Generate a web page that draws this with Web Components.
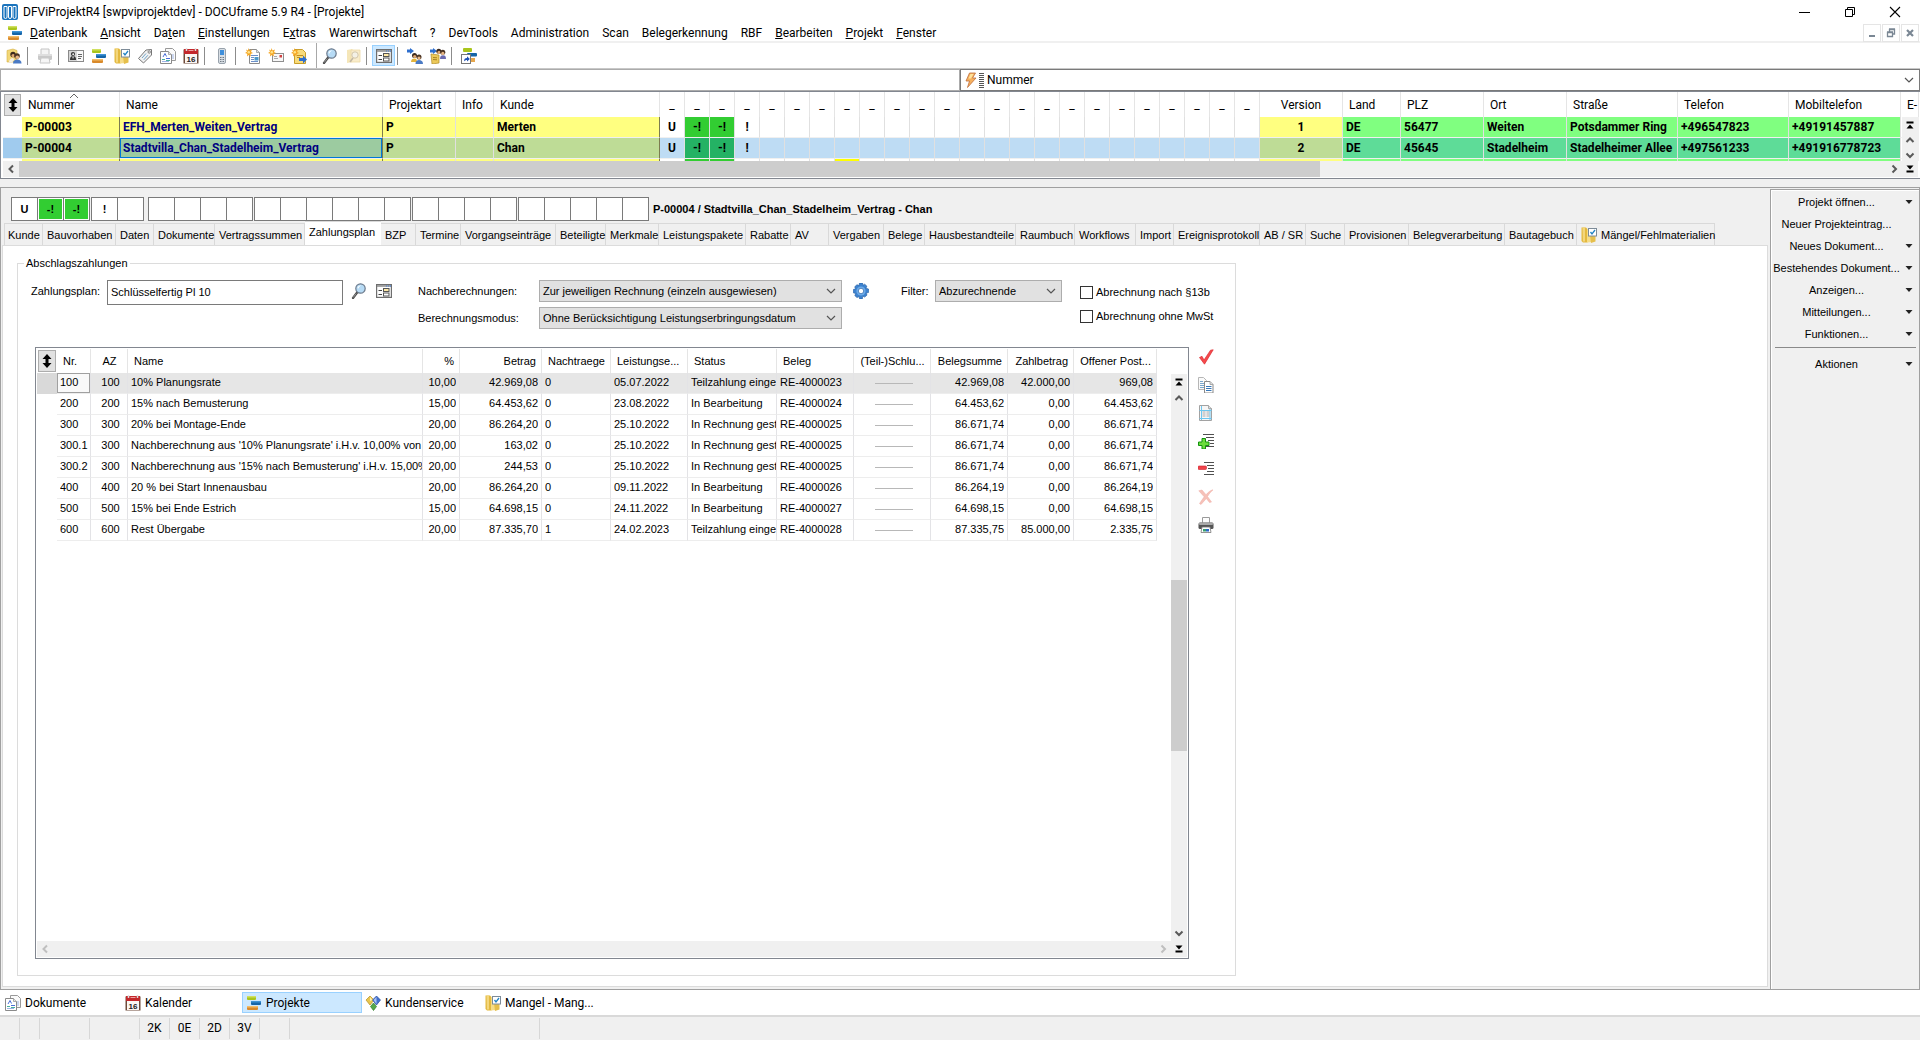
<!DOCTYPE html>
<html lang="de">
<head>
<meta charset="utf-8">
<title>DFViProjektR4 [swpviprojektdev] - DOCUframe 5.9 R4 - [Projekte]</title>
<style>
  html, body { margin: 0; height: 100%; }
  body {
    --ui: Roboto, "Noto Sans", sans-serif;
    --form: "Liberation Sans", Arial, sans-serif;
    font: 12px/16px var(--ui);
    color: #000;
    background: #fff;
  }
</style>
</head>
<body>
<df-app></df-app>
<script>
const ICONS = {
  app: '<rect x="0" y="0" width="16" height="16" rx="2" fill="#1b74bd"/><path d="M2 13V2.500h3V13a1 1 0 0 1-3 0zM6.500 13V2.500h3V13a1 1 0 0 1-3 0zM11 13V2.500h3V13a1 1 0 0 1-3 0z" fill="#1b74bd" stroke="#fff" stroke-width="1"/>',
  gantt: '<rect x="1" y="1" width="9" height="4" rx="1" fill="#a9c51c"/><rect x="1" y="1" width="9" height="1.500" fill="#d0e060"/><rect x="5" y="6" width="10" height="4" rx="1" fill="#1565a8"/><rect x="5" y="6" width="10" height="1.500" fill="#3f93d6"/><rect x="1" y="11" width="11" height="4" rx="1" fill="#d98a2b"/><rect x="1" y="11" width="11" height="1.500" fill="#f3bd6b"/>',
  people: '<path d="M1 2.500l6-1.500 4 1.500V14H1z" fill="#f2d777" stroke="#d5b043" stroke-width=".6"/><circle cx="7" cy="6.500" r="2.700" fill="#3c2a1e"/><circle cx="7.200" cy="7.600" r="1.700" fill="#e0a871"/><circle cx="11" cy="8" r="2.800" fill="#4a3322"/><circle cx="11.300" cy="9.200" r="1.800" fill="#e8b684"/><path d="M7 15.500c0-3 2-4 4.300-4s4.200 1 4.200 4z" fill="#4a7ac4"/><path d="M3 14c0-2 2-4 4-4l1.200 1.500L6.500 14z" fill="#f5efe0"/>',
  printerOff: '<path d="M4 1h8v6H4z" fill="#f4f4f4" stroke="#c4c4c4"/><rect x="1" y="6" width="14" height="6" rx="1.500" fill="#c9c9c9"/><rect x="1" y="6" width="14" height="2" rx="1" fill="#dedede"/><path d="M4 10h8l1 5H3z" fill="#f6f6f6" stroke="#c8c8c8"/>',
  printer: '<path d="M4.500.500h7v6h-7z" fill="#fdfdfd" stroke="#9a9a9a"/><rect x=".5" y="5.500" width="15" height="6.500" rx="1.500" fill="#555"/><rect x="1" y="5.500" width="14" height="2.500" rx="1" fill="#a9a9a9"/><path d="M4 10h8l1 5.500H3z" fill="#fff" stroke="#777" stroke-width=".8"/><rect x="5" y="12" width="3" height="2.500" fill="#38a070"/><rect x="8" y="12" width="3" height="2.500" fill="#2c67c8"/>',
  card: '<rect x=".5" y="2.500" width="15" height="11" fill="#f8f8f8" stroke="#8a8a8a"/><rect x="1" y="3" width="8" height="10" fill="#d6d6d6"/><circle cx="5" cy="6" r="2.100" fill="#333"/><path d="M2 12c0-3 1-4 3-4s3 1 3 4z" fill="#333"/><circle cx="5.200" cy="6.300" r="1" fill="#eee"/><path d="M4.300 8.500h1.600L5 11z" fill="#fff"/><path d="M10 6.500h4M10 8.500h4M10 10.500h3" stroke="#666"/>',
  folderCheck: '<path d="M.5.500h4.500l1.500 1.500v13.500H2L.5 14z" fill="#e3b93f"/><path d="M1.500.500h2.500v14H2z" fill="#f3d67c"/><path d="M6 3h5v12l-5 .5z" fill="#f6dc87"/><path d="M9 8h5.500v6.500L10 16z" fill="#e5bf4c"/><rect x="7.500" y="1.500" width="8" height="7.500" fill="#fff" stroke="#7d8b98"/><path d="M9.500 5l1.500 2 3-4" fill="none" stroke="#2183c4" stroke-width="1.300"/>',
  tag: '<path d="M1.500 10.500L9 2l5.500-.5v5.500L6.500 15z" fill="#f1f1f1" stroke="#777"/><path d="M5 10l4-4.500M6.800 11.800l4-4.500" stroke="#6ea3c9"/><circle cx="12.200" cy="4" r="1.200" fill="#fff" stroke="#666" stroke-width=".8"/>',
  docs: '<path d="M5.500.500h7l3 3v9h-10z" fill="#fafafa" stroke="#999"/><path d="M.5 3.500h8l3 3v9H.5z" fill="#fff" stroke="#8a8a8a"/><path d="M8.500 3.500v3h3" fill="#e6e6e6" stroke="#999" stroke-width=".8"/><path d="M3 9l2-3.500 1.500 3M6 10.500h4" fill="none" stroke="#4a6fd8"/><path d="M2 11.500h3M6 12.500h4" stroke="#47b0a0"/><path d="M2 13.500h7" stroke="#9db4e6"/><path d="M13 6v5" stroke="#9db4e6"/>',
  calendar: '<rect x=".5" y="1.500" width="15" height="14" fill="#6e4b3a"/><rect x="2" y="6" width="12" height="9" fill="#fbf6f3"/><rect x="1" y="1" width="14" height="5" fill="#c3272b"/><path d="M3.500 0v3M12.500 0v3" stroke="#ddd" stroke-width="1.500"/><path d="M5.500 2.500h5" stroke="#f0a0a0"/><text x="8" y="13.500" text-anchor="middle" font-family="Liberation Sans,Arial,sans-serif" font-size="8" font-weight="700" fill="#222">16</text>',
  phone: '<rect x="4.500" y=".5" width="7" height="15" rx="1.500" fill="#d8dee4" stroke="#98a2ac"/><rect x="6" y="2" width="4" height="5" fill="#3f8fdb"/><path d="M6 9.500h4M6 11.500h4M6 13.500h4" stroke="#707a84" stroke-dasharray="1 .5"/>',
  newDoc: '<path d="M4.500 1.500h7l3 3v11h-10z" fill="#fff" stroke="#8b8b8b"/><path d="M11.500 1.500v3h3" fill="#ddd" stroke="#999" stroke-width=".8"/><path d="M6 7.500h7M6 9.500h3M6 11.500h3M6 13.500h7" stroke="#6c8fc8"/><rect x="9.500" y="9" width="4" height="3.500" fill="#4d9aca"/><path d="M3.500 0l1 2.500L7 1.500 6 4l2 1-2.500 1 .5 2.500L3.800 7 2 8.500l.3-2.700L0 5l2-1.200L1 1.500l2 1z" fill="#f5a623"/><circle cx="3.800" cy="4.200" r="1.300" fill="#ffe48a"/>',
  newMail: '<rect x="4.500" y="5.500" width="11" height="8" fill="#f7f7f7" stroke="#8f8f8f"/><rect x="11.500" y="7" width="2.500" height="2.500" fill="#cf4040"/><path d="M6 10.500h4M6 8.500h3" stroke="#aaa"/><path d="M3.500 0l1 2.500L7 1.500 6 4l2 1-2.500 1 .5 2.500L3.800 7 2 8.500l.3-2.700L0 5l2-1.200L1 1.500l2 1z" fill="#f5a623"/><circle cx="3.800" cy="4.200" r="1.300" fill="#ffe48a"/>',
  newEntry: '<path d="M3.500 1.500h8l3 3v11h-11z" fill="#f8db7b" stroke="#c99e2b"/><path d="M6 7.500h6M6 9.500h3" stroke="#c08f20"/><path d="M8 10h4V7.500l4 4-4 4V13H8z" fill="#2e6fce"/><path d="M3.500 0l1 2.500L7 1.500 6 4l2 1-2.500 1 .5 2.500L3.800 7 2 8.500l.3-2.700L0 5l2-1.200L1 1.500l2 1z" fill="#f5a623"/><circle cx="3.800" cy="4.200" r="1.300" fill="#ffe48a"/>',
  lens: '<path d="M2 15l4.500-6" stroke="#4b4b4b" stroke-width="2.200" stroke-linecap="round"/><path d="M2.200 14.500l3-4" stroke="#b0b0b0" stroke-width=".7"/><circle cx="9.500" cy="5.500" r="4.700" fill="#b7dbf5" stroke="#6c7a8c" stroke-width="1.200"/><path d="M6.500 5c.3-2 2-2.800 3.800-2.500-1.500.5-2.500 1.500-3 3.200z" fill="#fff"/>',
  folderLens: '<path d="M2 2l5-1 1 1v12l-6 1z" fill="#f5e6b8"/><path d="M6 2h9v12H6z" fill="#f9eccb" stroke="#eddba6" stroke-width=".8"/><path d="M5 14l3-4" stroke="#c2b8a4" stroke-width="1.600"/><circle cx="10" cy="7" r="3.200" fill="#f4f1e6" stroke="#d3c7ab"/>',
  form: '<rect x=".6" y="1.600" width="14.800" height="12.800" fill="#fdfdfd" stroke="#6e6e6e" stroke-width="1.200"/><path d="M1 3h14" stroke="#8b8b8b" stroke-width="1.500"/><path d="M10 3h1M12 3h1M14 3h1" stroke="#3d7ee0"/><path d="M2.500 7.500H6M2.500 11.500H6" stroke="#444"/><rect x="7.500" y="5.500" width="5.500" height="3" fill="#ffe9a6" stroke="#555"/><rect x="7.500" y="10" width="5.500" height="3" fill="#fff" stroke="#555"/>',
  arrowPeople: '<path d="M0 1.500h3V0l4 3-4 3V4.500H0z" fill="#2e6fce"/><circle cx="7.500" cy="7.500" r="2.500" fill="#3c2a1e"/><circle cx="7.700" cy="8.500" r="1.600" fill="#e0a871"/><path d="M4 14c0-2.500 1.500-3.500 3.500-3.500S10 12 10 14z" fill="#e4b43a"/><circle cx="12" cy="9" r="2.500" fill="#4a3322"/><circle cx="12" cy="10" r="1.600" fill="#e8b684"/><path d="M8.500 16c0-3 1.500-4 3.500-4s4 1 4 4z" fill="#4a7ac4"/>',
  folderPeople: '<path d="M1 6l8 1v8l-7 1z" fill="#ecc95a" stroke="#b08c28" stroke-width=".7"/><path d="M3 9.500l4 .3M3 11.500l4 .3" stroke="#a88220"/><path d="M0 1.500h3V0l4 3-4 3V4.500H0z" fill="#2e6fce"/><circle cx="8.800" cy="3.300" r="2.500" fill="#3c2a1e"/><circle cx="9" cy="4.400" r="1.600" fill="#e0a871"/><circle cx="12.800" cy="4.300" r="2.500" fill="#4a3322"/><circle cx="12.800" cy="5.400" r="1.600" fill="#e8b684"/><path d="M10 11c0-3 1-3.800 3-3.800s3 .8 3 3.800z" fill="#6b6bb0"/>',
  ganttLink: '<rect x="2" y="0" width="9" height="4" rx="1" fill="#a9c51c"/><rect x="6" y="5" width="10" height="3.500" rx="1" fill="#1565a8"/><rect x="8" y="10" width="6" height="4" fill="#e6a64c"/><rect x=".5" y="6.500" width="9" height="9" fill="#fff" stroke="#777"/><path d="M3 13.500c0-2.500 1-3.500 3-3.500V8.300L8.800 11 6 13.500V12c-1.500 0-2 .5-3 1.500z" fill="#1d50b4"/>',
  bolt: '<path d="M6.500 1h6L9.500 6H13L4.500 15.500 6.500 9H3z" fill="#f6b05e" stroke="#bf6f3c" stroke-width=".8"/><path d="M7.500 2h3L8 6.500H5.500z" fill="#ffe39a"/>',
  gear: '<path d="M6.500 0h3l.5 2.200 1.700-1 2.200 2-1 2L15.500 6v3.500l-2.300.6.8 2-2.300 2-1.900-1L9.300 16H6.700l-.7-2.400-2 1-2.200-2 1-2L.3 9.800V6.500l2.300-.7-.9-2L4 1.700l2 .9z" fill="#3d82cf" stroke="#1f5a9f" stroke-width=".6"/><circle cx="8" cy="8" r="4.600" fill="#6cabe8"/><circle cx="8" cy="8" r="2.700" fill="#fff" stroke="#2b66ab" stroke-width=".7"/>',
  check: '<path d="M1.500 8.500L4 7.300 6 11 12.500 1.200 15.200.800 6.500 15.200z" fill="#f5494c" stroke="#dc2b30" stroke-width=".7"/>',
  copy: '<path d="M.5.500h5l3 3v9h-8z" fill="#fafafa" stroke="#b6b6b6"/><path d="M2 4.500h3M2 6.500h4M2 8.500h4M2 10.500h4" stroke="#7aa7cd"/><path d="M6.500 4.500h5.500l3 3v8.500H6.500z" fill="#fff" stroke="#8a8a8a"/><path d="M12 4.500v3h3" fill="#ddd" stroke="#999" stroke-width=".8"/><path d="M8 9.500h5.500M8 11.500h5.500M8 13.500h5.500" stroke="#3978b8"/>',
  report: '<path d="M1.500.500h9l3 3v12h-12z" fill="#f6f6f6" stroke="#a2a2a2"/><path d="M10.500.500v3h3" fill="#ddd" stroke="#999" stroke-width=".8"/><path d="M4.500 7h3M4.500 9h3M4.500 11h3M8.500 7h3M8.500 9h3M8.500 11h3" stroke="#aaa" stroke-width="1.200"/><path d="M3.500 1v14M12 4v11M1.500 5.500h12M1.500 13.500h12" stroke="#6cc6ef"/>',
  addLine: '<path d="M5 1.500h11M8 4.500h8M10 7.500h6M12 10.500h4M8 13.500h8" stroke="#505050"/><path d="M4 5.500h3.500V9H11v3.500H7.500V16H4v-3.500H.5V9H4z" fill="#6bdc3c" stroke="#12920f"/>',
  removeLine: '<path d="M6 1.500h10M9 4.500h7M10 7.500h6M9 10.500h7M6 13.500h10" stroke="#505050"/><rect x="0" y="5" width="8.500" height="3.500" rx="1" fill="#f0444a" stroke="#ce2430" stroke-width=".6"/>',
  cross: '<path d="M.8 1.800L4 1l4 4.700C10 3.500 12 1.500 15 .800 12.500 3 11 5 9.500 7.500l4 5.500-2 .5-3.200-4L3 15.500l-1.500-1L6.200 7.800z" fill="#f6c1b8" stroke="#efaba2" stroke-width=".5"/>',
  diamonds: '<path d="M5 1l4 4-4 5-4-5z" fill="#e8c64f" stroke="#b58f22" stroke-width=".7"/><path d="M11.500 1l4 4-4 5-4-5z" fill="#3f6fd0" stroke="#274a9c" stroke-width=".7"/><path d="M11.500 2v7l-3-4z" fill="#a9c2f2"/><path d="M8.500 8l3 3.500-3 4-3-4z" fill="#55a84a" stroke="#2f7a28" stroke-width=".7"/><path d="M5 2l2.500 3L5 6z" fill="#fff2b0"/>',
  sort: '<path d="M8 1l4.500 5H9.500v4h3L8 15l-4.500-5h3V6h-3z" fill="#000"/>',
  asc: '<path d="M4 5l4-4 4 4" fill="none" stroke="#666"/>',
  chevron: '<path d="M4 6l4 4 4-4" fill="none" stroke="#555" stroke-width="1.200"/>',
  up: '<path d="M4.500 10L8 6.500l3.500 3.500" fill="none" stroke="#5a5a5a" stroke-width="2"/>',
  down: '<path d="M4.500 6.500L8 10l3.500-3.500" fill="none" stroke="#5a5a5a" stroke-width="2"/>',
  left: '<path d="M10 4.500L6.500 8l3.500 3.500" fill="none" stroke="currentColor" stroke-width="2"/>',
  right: '<path d="M6.500 4.500L10 8l-3.500 3.500" fill="none" stroke="currentColor" stroke-width="2"/>',
  first: '<path d="M4.500 4.500h7v2h-7zM8 7.500l3.500 4h-7z"/>',
  last: '<path d="M4.500 9.500h7v2h-7zM8 8.500l3.500-4h-7z"/>',
  drop: '<path d="M4.500 6h7L8 10z" fill="#222"/>',
  min: '<path d="M2 8.500h11" stroke="#000"/>',
  max: '<path d="M3.500 5.500h7v7h-7zM5.500 5.500v-2h7v7h-2" fill="none" stroke="#000"/>',
  close: '<path d="M3 3l10 10M13 3L3 13" stroke="#000" stroke-width="1.100"/>',
  mdiMin: '<path d="M5 10h6v2H5z" fill="#7a8794"/>',
  mdiMax: '<path d="M4.500 7.500h5v4h-5zM4 7h6M6.500 7V4.500h5V9h-2M6 4h6" fill="none" stroke="#7a8794" stroke-width="1.300"/>',
  mdiClose: '<path d="M5 5l6 6M11 5l-6 6" stroke="#7a8794" stroke-width="2.200"/>'
};

class DfElement extends HTMLElement {
  paint(css, html) {
    if (!this.shadowRoot) this.attachShadow({ mode: "open" });
    this.shadowRoot.innerHTML = `<style>
      *, *::before { box-sizing: border-box; }
      button, input, select { font: inherit; color: inherit; margin: 0; padding: 0; border: 0; background: none; border-radius: 0; }
      ${css}</style>${html}`;
  }
}
const define = (name, cls) => customElements.define(name, cls);

define("df-icon", class extends DfElement {
  connectedCallback() {
    this.paint(`:host { display: block; width: 16px; height: 16px; flex: none; } svg { display: block; }`,
      `<svg width="16" height="16" viewBox="0 0 16 16" aria-hidden="true">${ICONS[this.getAttribute("name")]}</svg>`);
  }
});

define("df-titlebar", class extends DfElement {
  connectedCallback() {
    this.paint(`
      :host { display: flex; align-items: center; height: 24px; padding: 0 3px 0 2px; background: #fff; }
      .text { flex: 1; padding-left: 5px; white-space: nowrap; }
      button { display: flex; justify-content: center; align-items: center; width: 45px; height: 24px; }
      button:hover { background: #e5e5e5; }`,
      `<df-icon name="app"></df-icon><span class="text"><slot></slot></span>
      <button aria-label="Minimieren"><df-icon name="min"></df-icon></button>
      <button aria-label="Wiederherstellen"><df-icon name="max"></df-icon></button>
      <button aria-label="Schließen"><df-icon name="close"></df-icon></button>`);
  }
});

define("df-menubar", class extends DfElement {
  connectedCallback() {
    const items = ["_Datenbank", "_Ansicht", "Da_ten", "_Einstellungen", "E_xtras", "Warenwirtschaft", "?", "DevTools",
      "Administration", "Scan", "Belegerkennung", "RBF", "_Bearbeiten", "_Projekt", "_Fenster"];
    this.paint(`
      :host { display: flex; align-items: center; height: 19px; border-bottom: 2px solid #f0f0f0; background: #fff; }
      nav { display: flex; flex: 1; align-items: center; padding: 1px 0 0 7px; }
      nav button { padding: 0 6px 0 7px; line-height: 17px; white-space: nowrap; }
      nav button:hover { background: #e5f3ff; }
      .mdi { display: flex; gap: 1px; padding-right: 1px; }
      .mdi button { display: flex; align-items: center; justify-content: center; width: 18px; height: 18px; border: 1px solid #e5e5e5; }`,
      `<nav><df-icon name="gantt"></df-icon>${items.map(t => `<button>${t.replace(/_(.)/, "<u>$1</u>")}</button>`).join("")}</nav>
      <div class="mdi"><button aria-label="Minimieren"><df-icon name="mdiMin"></df-icon></button><button aria-label="Wiederherstellen"><df-icon name="mdiMax"></df-icon></button><button aria-label="Schließen"><df-icon name="mdiClose"></df-icon></button></div>`);
  }
});

define("df-toolbar", class extends DfElement {
  connectedCallback() {
    const items = "people | printerOff | card gantt folderCheck tag docs calendar | phone | newDoc newMail newEntry || lens folderLens | *form | arrowPeople folderPeople | ganttLink".split(" ");
    this.paint(`
      :host { display: flex; align-items: center; height: 26px; padding-left: 2px; border-bottom: 1px solid #c8c8c8; background: #fff; }
      button { display: flex; align-items: center; justify-content: center; width: 23px; height: 21px; }
      button:hover { background: #e5f3ff; }
      .on { background: #cce8ff; border: 1px solid #99d1ff; }
      i { width: 8px; height: 18px; padding-left: 2px; }
      i::before { content: ""; display: block; width: 1px; height: 100%; background: #8c8c8c; }
      .wide { height: 25px; padding-left: 6px; }
      .wide::before { background: #a8a8a8; }`,
      items.map(n => n === "|" ? "<i></i>" : n === "||" ? '<i class="wide"></i>'
        : `<button class="${n[0] === "*" ? "on" : ""}" aria-label="${n.replace("*", "")}"><df-icon name="${n.replace("*", "")}"></df-icon></button>`).join(""));
  }
});

define("df-select", class extends DfElement {
  connectedCallback() {
    this.paint(`
      :host { display: grid; grid-template-columns: 1fr 18px; height: 22px; border: 1px solid #adadad; background: #e1e1e1; }
      select { grid-area: 1 / 1 / 2 / 3; min-width: 0; padding: 0 18px 0 3px; appearance: none; outline: 0; }
      df-icon { grid-area: 1 / 2; align-self: center; pointer-events: none; }`,
      `<select aria-label="${this.getAttribute("label")}"><option>${this.getAttribute("value")}</option></select><df-icon name="chevron"></df-icon>`);
  }
});

define("df-searchbar", class extends DfElement {
  connectedCallback() {
    this.paint(`
      :host { display: grid; grid-template-columns: repeat(2, minmax(0, 1fr)); height: 22px; background: #fff; }
      input { width: 100%; padding: 0 4px; border: 1px solid #ababab; background: #fff; outline: 0; }
      .field { display: flex; align-items: center; padding-left: 2px; border: 1px solid #7a7a7a; }
      .bars { width: 5px; height: 15px; background: repeating-linear-gradient(#555 0 1px, #fff 1px 2px); }
      df-select { flex: 1; height: 20px; border: 0; background: #fff; }`,
      `<input aria-label="Suche"><div class="field"><df-icon name="bolt"></df-icon><span class="bars"></span><df-select label="Suchfeld" value="Nummer"></df-select></div>`);
  }
});

define("df-scrollbar", class extends DfElement {
  connectedCallback() {
    const vertical = this.hasAttribute("vertical");
    this.paint(`
      :host { display: flex; background: #f0f0f0; height: 16px; color: #5a5a5a; }
      :host([vertical]) { flex-direction: column; width: 16px; height: auto; }
      :host([idle]) { color: #bfbfbf; }
      .track { flex: 1; display: flex; flex-direction: inherit; }
      .before { flex: var(--before, 0); } .thumb { flex: var(--thumb, 0); background: #cdcdcd; } .after { flex: var(--after, 1); }
      df-icon { color: inherit; }`,
      `${vertical ? '<df-icon name="first"></df-icon><df-icon name="up"></df-icon>' : '<df-icon name="left"></df-icon>'}
      <div class="track"><span class="before"></span><span class="thumb"></span><span class="after"></span></div>
      <df-icon name="${vertical ? "down" : "right"}"></df-icon>`);
  }
});

define("df-projects", class extends DfElement {
  connectedCallback() {
    const flags = Array(24).fill(25);
    const widths = [19, 98, 263, 73, 38, 166, ...flags, 83, 58, 83, 83, 111, 111, 112];
    const heads = ["Nummer", "Name", "Projektart", "Info", "Kunde", ...flags.map(() => "_"), "Version", "Land", "PLZ", "Ort", "Straße", "Telefon", "Mobiltelefon", "E-"];
    const kind = i => i < 5 ? "y" : i < 29 ? ([6, 7].includes(i) ? "f g" : "f") : i === 29 ? "y c" : "t";
    const row = (cls, v) => {
      const cells = [...v.slice(0, 5), "U", "-!", "-!", "!", ...Array(20).fill(""), ...v.slice(5)];
      return `<tr class="${cls}"><th></th>${cells.map((t, i) => `<td class="${kind(i)}${i === 1 ? " n" : ""}${i === 12 ? " h" : ""}"><div>${t}</div></td>`).join("")}<td></td></tr>`;
    };
    this.paint(`
      :host { display: grid; grid-template: 69px 16px / minmax(0, 1fr) 17px; border: 1px solid #828790; border-right: 0; padding: 0 1px 1px 2px; background: #fff; }
      .view { grid-area: 1 / 1 / 2 / 3; overflow: hidden; }
      table { width: 100%; border-collapse: separate; border-spacing: 0; table-layout: fixed; }
      thead th { height: 25px; padding: 1px 0 0 6px; border-right: 1px solid #e5e5e5; font-weight: 400; text-align: left; white-space: nowrap; overflow: hidden; }
      thead th:first-child { padding: 1px; border: 0; }
      thead .c { padding: 1px 0 0; text-align: center; }
      thead button { display: flex; align-items: center; justify-content: center; width: 17px; height: 22px; border: 1px solid #adadad; background: #e1e1e1; }
      .sorted { display: grid; }
      .sorted > * { grid-area: 1 / 1; }
      .sorted df-icon { justify-self: center; height: 6px; margin-top: -4px; overflow: hidden; }
      td, tbody th { height: 21px; padding: 0 0 0 3px; border-right: 1px solid #e0e0e0; border-bottom: 1px solid #f0f0f0; font-weight: 700; overflow: hidden; vertical-align: top; }
      td div { overflow: hidden; white-space: nowrap; height: 20px; line-height: 20px; }
      .y { background: #ffff80; } .t { background: #80ff80; } .g { background: #32cd32; }
      .f, .c { text-align: center; padding: 0; }
      td:nth-child(2), td:nth-child(3), td:nth-child(6) { border-right-color: #7c7c50; }
      .n { color: #000080; }
      tbody th { border-right: 0; }
      .sel th { background: #a0cbee; } .sel .y { background: #bedc96; } .sel .f { background: #bedcf4; }
      .sel .g { background: #24b264; } .sel .t { background: #5edc98; }
      .sel .n { background: #9ccba0; box-shadow: inset 0 0 0 1px #0078d7; }
      .cut .h { background: #ffff00; }
      .v { grid-area: 1 / 2; margin-top: 25px; display: flex; flex-direction: column; justify-content: space-between; background: #f0f0f0; }
      .v df-icon { height: 14px; }
      .corner { grid-area: 2 / 2; background: #f0f0f0; }`,
      `<div class="view"><table><colgroup>${widths.map(w => `<col style="width:${w}px">`).join("")}<col></colgroup>
        <thead><tr><th><button aria-label="Sortierung"><df-icon name="sort"></df-icon></button></th>${heads.map((h, i) => `<th class="${i > 4 && i < 30 ? "c" : ""}">${i ? h : `<span class="sorted"><span>${h}</span><df-icon name="asc"></df-icon></span>`}</th>`).join("")}</tr></thead>
        <tbody>${row("", ["P-00003", "EFH_Merten_Weiten_Vertrag", "P", "", "Merten", "1", "DE", "56477", "Weiten", "Potsdammer Ring", "+496547823", "+49191457887"])}
        ${row("sel", ["P-00004", "Stadtvilla_Chan_Stadelheim_Vertrag", "P", "", "Chan", "2", "DE", "45645", "Stadelheim", "Stadelheimer Allee", "+497561233", "+491916778723"])}
        <tr class="cut"><th></th>${Array.from({ length: 36 }, (_, i) => `<td class="${kind(i)}${i === 12 ? " h" : ""}"></td>`).join("")}<td></td></tr></tbody></table></div>
      <div class="v"><df-icon name="first"></df-icon><df-icon name="up"></df-icon><df-icon name="down"></df-icon></div>
      <df-scrollbar style="--before:0;--thumb:1300;--after:566"></df-scrollbar>
      <df-icon class="corner" name="last"></df-icon>`);
  }
});

define("df-plan-grid", class extends DfElement {
  connectedCallback() {
    const cols = [["Nr.", 34], ["AZ", 37, "c"], ["Name", 295], ["%", 37, "r"], ["Betrag", 82, "r"], ["Nachtraege", 69], ["Leistungse...", 77], ["Status", 89],
      ["Beleg", 77], ["(Teil-)Schlu...", 77, "c"], ["Belegsumme", 77, "r"], ["Zahlbetrag", 66, "r"], ["Offener Post...", 83, "r"]];
    const rows = [
      ["100", "100", "10% Planungsrate", "10,00", "42.969,08", "0", "05.07.2022", "Teilzahlung einge", "RE-4000023", "-", "42.969,08", "42.000,00", "969,08"],
      ["200", "200", "15% nach Bemusterung", "15,00", "64.453,62", "0", "23.08.2022", "In Bearbeitung", "RE-4000024", "-", "64.453,62", "0,00", "64.453,62"],
      ["300", "300", "20% bei Montage-Ende", "20,00", "86.264,20", "0", "25.10.2022", "In Rechnung gest", "RE-4000025", "-", "86.671,74", "0,00", "86.671,74"],
      ["300.1", "300", "Nachberechnung aus '10% Planungsrate' i.H.v. 10,00% von", "20,00", "163,02", "0", "25.10.2022", "In Rechnung gest", "RE-4000025", "-", "86.671,74", "0,00", "86.671,74"],
      ["300.2", "300", "Nachberechnung aus '15% nach Bemusterung' i.H.v. 15,00%", "20,00", "244,53", "0", "25.10.2022", "In Rechnung gest", "RE-4000025", "-", "86.671,74", "0,00", "86.671,74"],
      ["400", "400", "20 % bei Start Innenausbau", "20,00", "86.264,20", "0", "09.11.2022", "In Bearbeitung", "RE-4000026", "-", "86.264,19", "0,00", "86.264,19"],
      ["500", "500", "15% bei Ende Estrich", "15,00", "64.698,15", "0", "24.11.2022", "In Bearbeitung", "RE-4000027", "-", "64.698,15", "0,00", "64.698,15"],
      ["600", "600", "Rest Übergabe", "20,00", "87.335,70", "1", "24.02.2023", "Teilzahlung einge", "RE-4000028", "-", "87.335,75", "85.000,00", "2.335,75"]];
    const cell = (t, i) => `<td class="${cols[i][2] || ""}"><div>${t === "-" ? "<hr>" : t}</div></td>`;
    this.paint(`
      :host { display: grid; grid-template: 25px minmax(0, 1fr) 16px / minmax(0, 1fr) 16px; padding: 1px; border: 1px solid #828790; background: #fff; }
      .view { grid-area: 1 / 1 / 3 / 2; overflow: hidden; }
      table { width: 1120px; border-collapse: separate; border-spacing: 0; table-layout: fixed; }
      thead th { height: 24px; padding: 0 5px 0 6px; border-right: 1px solid #e5e5e5; font-weight: 400; text-align: left; white-space: nowrap; overflow: hidden; }
      thead th:first-child { padding: 1px; border: 0; }
      thead button { display: flex; align-items: center; justify-content: center; width: 18px; height: 22px; border: 1px solid #adadad; background: #e1e1e1; }
      td { height: 21px; padding: 0 0 0 3px; border-right: 1px solid #e3e3e6; border-bottom: 1px solid #ededed; vertical-align: top; }
      td div { overflow: hidden; white-space: nowrap; height: 20px; line-height: 19px; }
      th.r, td.r { text-align: right; } td.r { padding: 0 3px; } th.c, td.c { text-align: center; }
      hr { width: 38px; height: 1px; margin: 10px auto 0; border: 0; background: #b8b8b8; }
      tbody tr:first-child td { background: #e6e6e6; } tbody tr:first-child th { background: #d9d9d9; }
      tbody tr:first-child td:nth-child(2) { background: #f9f9f9; box-shadow: inset 0 0 0 1px #a0a0a0; }
      .v { grid-area: 2 / 2; --before: 174; --thumb: 172; --after: 174; }
      .h { grid-area: 3 / 1; } .corner { grid-area: 3 / 2; background: #f0f0f0; }`,
      `<div class="view"><table><colgroup><col style="width:20px">${cols.map(c => `<col style="width:${c[1]}px">`).join("")}</colgroup>
        <thead><tr><th><button aria-label="Sortierung"><df-icon name="sort"></df-icon></button></th>${cols.map(c => `<th class="${c[2] || ""}">${c[0]}</th>`).join("")}</tr></thead>
        <tbody>${rows.map(r => `<tr><th></th>${r.map(cell).join("")}</tr>`).join("")}</tbody></table></div>
      <df-scrollbar class="v" vertical></df-scrollbar><df-scrollbar class="h" idle></df-scrollbar><df-icon class="corner" name="last"></df-icon>`);
  }
});

define("df-status-boxes", class extends DfElement {
  connectedCallback() {
    const groups = [["U", "-!", "-!"], ["!", ""], ["", "", "", ""], Array(6).fill(""), Array(4).fill(""), Array(5).fill("")];
    this.paint(`
      :host { display: flex; align-items: center; gap: 2px; padding: 9px 0 0 10px; font-weight: 700; }
      div { display: flex; } div:nth-of-type(3) { padding-left: 3px; }
      span { width: 27px; height: 24px; margin-right: -1px; border: 1px solid #7a7a7a; background: #fff; text-align: center; line-height: 22px; }
      .g { background: #32cd32; box-shadow: inset 0 0 0 1px #fff; }
      b { padding-left: 3px; white-space: nowrap; }`,
      groups.map(g => `<div>${g.map(t => `<span class="${t === "-!" ? "g" : ""}">${t}</span>`).join("")}</div>`).join("") + "<b><slot></slot></b>");
  }
});

define("df-tabs", class extends DfElement {
  connectedCallback() {
    const tabs = [["Kunde", 39], ["Bauvorhaben", 73], ["Daten", 38], ["Dokumente", 61], ["Vertragssummen", 90], ["Zahlungsplan", 76], ["BZP", 35], ["Termine", 45],
      ["Vorgangseinträge", 95], ["Beteiligte", 50], ["Merkmale", 53], ["Leistungspakete", 87], ["Rabatte", 45], ["AV", 38], ["Vergaben", 55], ["Belege", 41],
      ["Hausbestandteile", 91], ["Raumbuch", 59], ["Workflows", 61], ["Import", 38], ["Ereignisprotokoll", 86], ["AB / SR", 46], ["Suche", 39], ["Provisionen", 64],
      ["Belegverarbeitung", 96], ["Bautagebuch", 72], ["Mängel/Fehlmaterialien", 138]];
    this.paint(`
      :host { display: flex; flex-direction: column; flex: 1; min-height: 0; }
      .bar { display: flex; align-items: flex-end; padding-left: 3px; height: 24px; }
      button { flex: none; display: flex; align-items: center; gap: 4px; height: 22px; padding-left: 4px; border: 1px solid #d9d9d9; border-width: 1px 1px 0 0; white-space: nowrap; }
      button:first-child { border-left-width: 1px; padding-left: 3px; }
      .on { height: 25px; margin-bottom: -1px; padding-bottom: 4px; background: #fff; border-right: 0; }
      .page { display: flex; flex-direction: column; flex: 1; margin: 0 2px 2px 1px; border: 1px solid #dcdcdc; background: #fff; }`,
      `<div class="bar" role="tablist">${tabs.map(([t, w]) => `<button role="tab" class="${t === "Zahlungsplan" ? "on" : ""}" style="width:${w}px">${t.startsWith("Mängel") ? '<df-icon name="folderCheck"></df-icon>' : ""}${t}</button>`).join("")}</div>
      <div class="page"><slot></slot></div>`);
  }
});

define("df-plan-form", class extends DfElement {
  connectedCallback() {
    this.paint(`
      :host { display: flex; flex: 1; }
      fieldset { display: flex; flex-direction: column; flex: 1; max-width: 1219px; min-width: 0; margin: 10px 14px 10px; padding: 0; border: 1px solid #dcdcdc; }
      legend { margin-left: 6px; padding: 0 2px; line-height: 14px; }
      .filters { display: grid; grid-template: 22px 22px / 76px 236px 75px 121px 303px 59px 34px 127px 1fr; row-gap: 5px; padding: 10px 0 0 13px; align-items: center; }
      input[type=text] { height: 25px; padding: 0 3px 2px; border: 1px solid #7a7a7a; background: #fff; align-self: start; outline: 0; }
      .icons { display: flex; gap: 9px; padding-left: 8px; }
      .gear { padding-left: 11px; }
      .checks { grid-area: 1 / 9 / 3 / 10; display: flex; flex-direction: column; gap: 11px; align-self: start; padding: 6px 0 0 18px; }
      .checks label { display: flex; align-items: center; gap: 3px; line-height: 13px; white-space: nowrap; }
      .checks input { appearance: none; width: 13px; height: 13px; border: 1px solid #333; background: #fff; }
      .l2 { grid-area: 2 / 4; } .s2 { grid-area: 2 / 5; }
      .body { display: flex; flex: 1; gap: 9px; padding: 18px 0 16px 17px; }
      df-plan-grid { flex: 1; min-width: 0; }
      .tools { display: flex; flex-direction: column; gap: 12px; width: 37px; padding-top: 2px; }
      .tools button { height: 16px; width: 16px; }
      `,
      `<fieldset><legend>Abschlagszahlungen</legend>
      <div class="filters">
        <label for="plan">Zahlungsplan:</label><input id="plan" type="text" value="Schlüsselfertig Pl 10">
        <span class="icons"><button aria-label="Suchen"><df-icon name="lens"></df-icon></button><button aria-label="Formular"><df-icon name="form"></df-icon></button></span>
        <label>Nachberechnungen:</label><df-select label="Nachberechnungen" value="Zur jeweiligen Rechnung (einzeln ausgewiesen)"></df-select>
        <button class="gear" aria-label="Einstellungen"><df-icon name="gear"></df-icon></button>
        <label>Filter:</label><df-select label="Filter" value="Abzurechnende"></df-select>
        <label class="l2">Berechnungsmodus:</label><df-select class="s2" label="Berechnungsmodus" value="Ohne Berücksichtigung Leistungserbringungsdatum"></df-select>
        <div class="checks"><label><input type="checkbox">Abrechnung nach §13b</label><label><input type="checkbox">Abrechnung ohne MwSt</label></div>
      </div>
      <div class="body"><df-plan-grid></df-plan-grid>
        <div class="tools">${["check", "copy", "report", "addLine", "removeLine", "cross", "printer"].map(n => `<button aria-label="${n}"><df-icon name="${n}"></df-icon></button>`).join("")}</div></div>
      </fieldset>`);
  }
});

define("df-actions", class extends DfElement {
  connectedCallback() {
    const items = ["Projekt öffnen...", "Neuer Projekteintrag...", "Neues Dokument...", "Bestehendes Dokument...", "Anzeigen...", "Mitteilungen...", "Funktionen..."];
    const btn = (t, arrow) => `<button><span>${t}</span>${arrow ? '<df-icon name="drop"></df-icon>' : ""}</button>`;
    this.paint(`
      :host { display: block; flex: none; width: 149px; margin-top: 1px; padding: 1px 1px 0 1px; border: 1px solid #a0a0a0; border-width: 1px 0 0 1px; box-shadow: inset 1px 1px #fff; }
      button { display: grid; grid-template-columns: 129px 17px; align-items: center; width: 100%; height: 22px; white-space: nowrap; }
      span { text-align: center; }
      button:hover { background: #e5f3ff; }
      hr { height: 1px; margin: 2px 2px 5px 3px; border: 0; background: #8a8a8a; }`,
      items.map((t, i) => btn(t, i !== 1)).join("") + "<hr>" + btn("Aktionen", true));
  }
});

define("df-workspace", class extends DfElement {
  connectedCallback() {
    this.paint(`
      :host { display: flex; flex: 1; margin-top: 8px; border: 1px solid #a0a0a0; background: #f0f0f0; font: 11px/14px var(--form); }
      main { display: flex; flex-direction: column; flex: 1; min-width: 0; }`,
      `<main><df-status-boxes>P-00004 / Stadtvilla_Chan_Stadelheim_Vertrag - Chan</df-status-boxes>
      <df-tabs><df-plan-form></df-plan-form></df-tabs></main><df-actions></df-actions>`);
  }
});

define("df-taskbar", class extends DfElement {
  connectedCallback() {
    const items = [["docs", "Dokumente"], ["calendar", "Kalender"], ["gantt", "Projekte"], ["diamonds", "Kundenservice"], ["folderCheck", "Mangel - Mang..."]];
    this.paint(`
      :host { display: flex; align-items: center; height: 27px; padding-left: 2px; border-bottom: 2px solid #d9d9d9; background: #fff; }
      button { display: flex; align-items: center; gap: 4px; width: 120px; height: 21px; padding-left: 3px; white-space: nowrap; }
      .on { background: #cce8ff; border: 1px solid #99d1ff; }`,
      items.map(([i, t]) => `<button class="${t === "Projekte" ? "on" : ""}"><df-icon name="${i}"></df-icon>${t}</button>`).join(""));
  }
});

define("df-statusbar", class extends DfElement {
  connectedCallback() {
    const cells = [[20], [20], [50], [50], [30, "2K"], [30, "0E"], [30, "2D"], [30, "3V"], [30], [250]];
    this.paint(`
      :host { display: flex; height: 23px; padding: 1px 0; background: #f0f0f0; }
      span { border-right: 1px solid #d7d7d7; text-align: center; line-height: 21px; }`,
      cells.map(([w, t = ""]) => `<span style="width:${w}px">${t}</span>`).join(""));
  }
});

define("df-app", class extends DfElement {
  connectedCallback() {
    this.paint(`:host { display: flex; flex-direction: column; min-height: 100vh; background: #f0f0f0; }`,
      `<df-titlebar>DFViProjektR4 [swpviprojektdev] - DOCUframe 5.9 R4 - [Projekte]</df-titlebar>
      <df-menubar></df-menubar><df-toolbar></df-toolbar><df-searchbar></df-searchbar>
      <df-projects></df-projects><df-workspace></df-workspace><df-taskbar></df-taskbar><df-statusbar></df-statusbar>`);
  }
});
</script>
</body>
</html>
